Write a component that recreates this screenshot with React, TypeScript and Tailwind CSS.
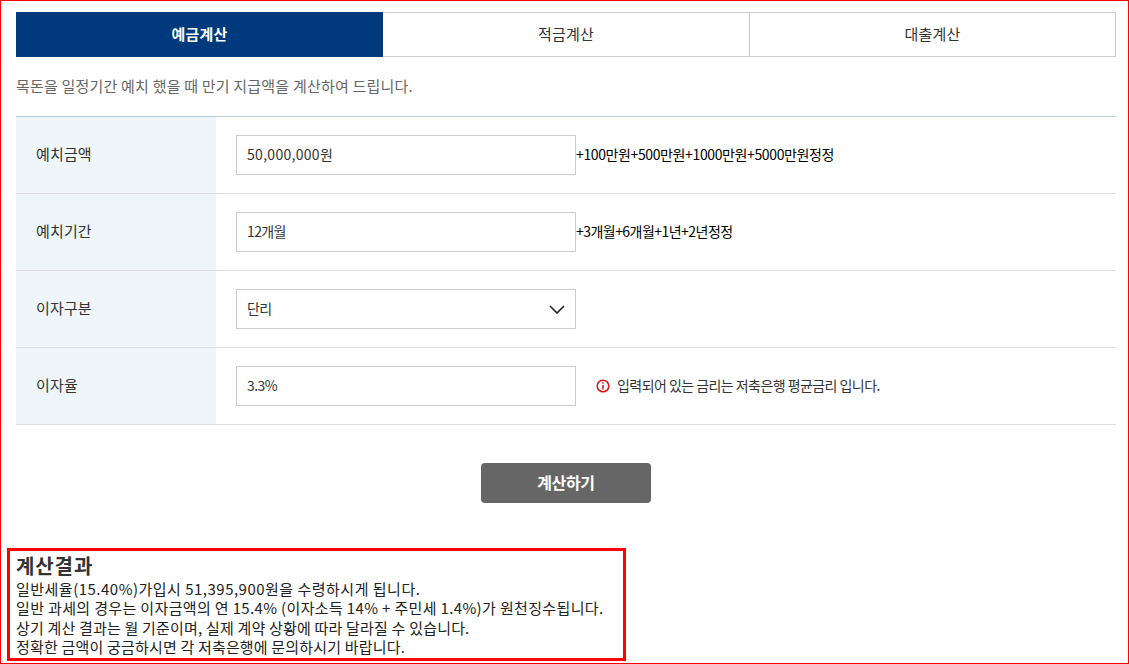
const font = { fontFamily: '"Noto Sans CJK KR", "Noto Sans", sans-serif' }

function Label({ children }: { children: string }) {
  return (
    <div className="flex w-[200px] shrink-0 items-center bg-[#eef6f9] pb-[2px] pl-5 text-[15px] tracking-[0.15px] text-[#333]">
      {children}
    </div>
  )
}

function Box({ children }: { children: React.ReactNode }) {
  return (
    <div className="relative flex h-10 w-[340px] shrink-0 items-center border border-[#ccc] bg-white pb-[2px] pl-2.5 text-[14px] tracking-[-0.6px] text-[#333]">
      {children}
    </div>
  )
}

function Row({ label, children }: { label: string; children: React.ReactNode }) {
  return (
    <div className="flex h-[77px] border-b border-[#ddd]">
      <Label>{label}</Label>
      <div className="flex flex-1 items-center pl-5">{children}</div>
    </div>
  )
}

export default function App() {
  return (
    <div style={font} className="h-[664px] w-[1129px] overflow-hidden border border-[#f00] bg-white">
      <div className="pl-[15px] pr-3 pt-[11px]">
        <div className="flex h-[45px] w-[1100px] text-[15px] tracking-[0.15px]">
          <div className="flex w-[367px] items-center justify-center bg-[#00397c] pb-px font-bold text-white">예금계산</div>
          <div className="flex w-[366px] items-center justify-center border-y border-[#ccc] pb-px text-[#333]">적금계산</div>
          <div className="flex w-[367px] items-center justify-center border border-[#ccc] pb-px text-[#333]">대출계산</div>
        </div>

        <p className="mt-[18px] h-[22px] text-[15px] leading-[21px] tracking-[0.2px] text-[#666]">
          목돈을 일정기간 예치 했을 때 만기 지급액을 계산하여 드립니다.
        </p>

        <div className="mt-[19px] w-[1100px] border-t border-[#b9cbe0]">
          <Row label="예치금액">
            <Box>
              <span className="tracking-[0.3px]">50,000,000원</span>
            </Box>
            <span className="pb-[2px] text-[14px] tracking-[-0.38px] text-black">
              +100만원+500만원+1000만원+5000만원정정
            </span>
          </Row>
          <Row label="예치기간">
            <Box>12개월</Box>
            <span className="pb-[2px] text-[14px] tracking-[-0.54px] text-black">+3개월+6개월+1년+2년정정</span>
          </Row>
          <Row label="이자구분">
            <Box>
              단리
              <svg width="16" height="9" viewBox="0 0 16 9" fill="none" className="absolute right-[10px] top-[15px]">
                <path d="M1 1l7 7 7-7" stroke="#222" strokeWidth="1.6" />
              </svg>
            </Box>
          </Row>
          <Row label="이자율">
            <Box>3.3%</Box>
            <div className="ml-5 flex items-center gap-[7px] pb-[2px] text-[14px] tracking-[-0.55px] text-[#333]">
              <svg width="14" height="14" viewBox="0 0 14 14" fill="none" className="mt-[2px] shrink-0">
                <circle cx="7" cy="7" r="5.8" stroke="#d7141a" strokeWidth="1.5" />
                <path d="M7 3.2v1.6M7 6v4.6" stroke="#d7141a" strokeWidth="1.5" />
              </svg>
              입력되어 있는 금리는 저축은행 평균금리 입니다.
            </div>
          </Row>
        </div>

        <div className="mt-[38px] flex w-[1100px] justify-center">
          <div className="flex h-10 w-[170px] items-center justify-center rounded bg-[#666] pb-[2px] text-[16px] font-bold tracking-[-0.35px] text-white">
            계산하기
          </div>
        </div>
      </div>

      <div className="ml-[6px] mt-[45px] h-[113px] w-[619px] border-[3px] border-[#f00] pl-[6px] text-[#222]">
        <h2 className="h-[28px] pt-px text-[20px] font-bold leading-[28px] tracking-[0.9px] text-[#333]">계산결과</h2>
        <div className="text-[15px] leading-[19.33px]">
          <p className="tracking-[0.49px]">일반세율(15.40%)가입시 51,395,900원을 수령하시게 됩니다.</p>
          <p className="tracking-[0.35px]">일반 과세의 경우는 이자금액의 연 15.4% (이자소득 14% + 주민세 1.4%)가 원천징수됩니다.</p>
          <p className="tracking-[0.19px]">상기 계산 결과는 월 기준이며, 실제 계약 상황에 따라 달라질 수 있습니다.</p>
          <p className="tracking-[0.18px]">정확한 금액이 궁금하시면 각 저축은행에 문의하시기 바랍니다.</p>
        </div>
      </div>
    </div>
  )
}
